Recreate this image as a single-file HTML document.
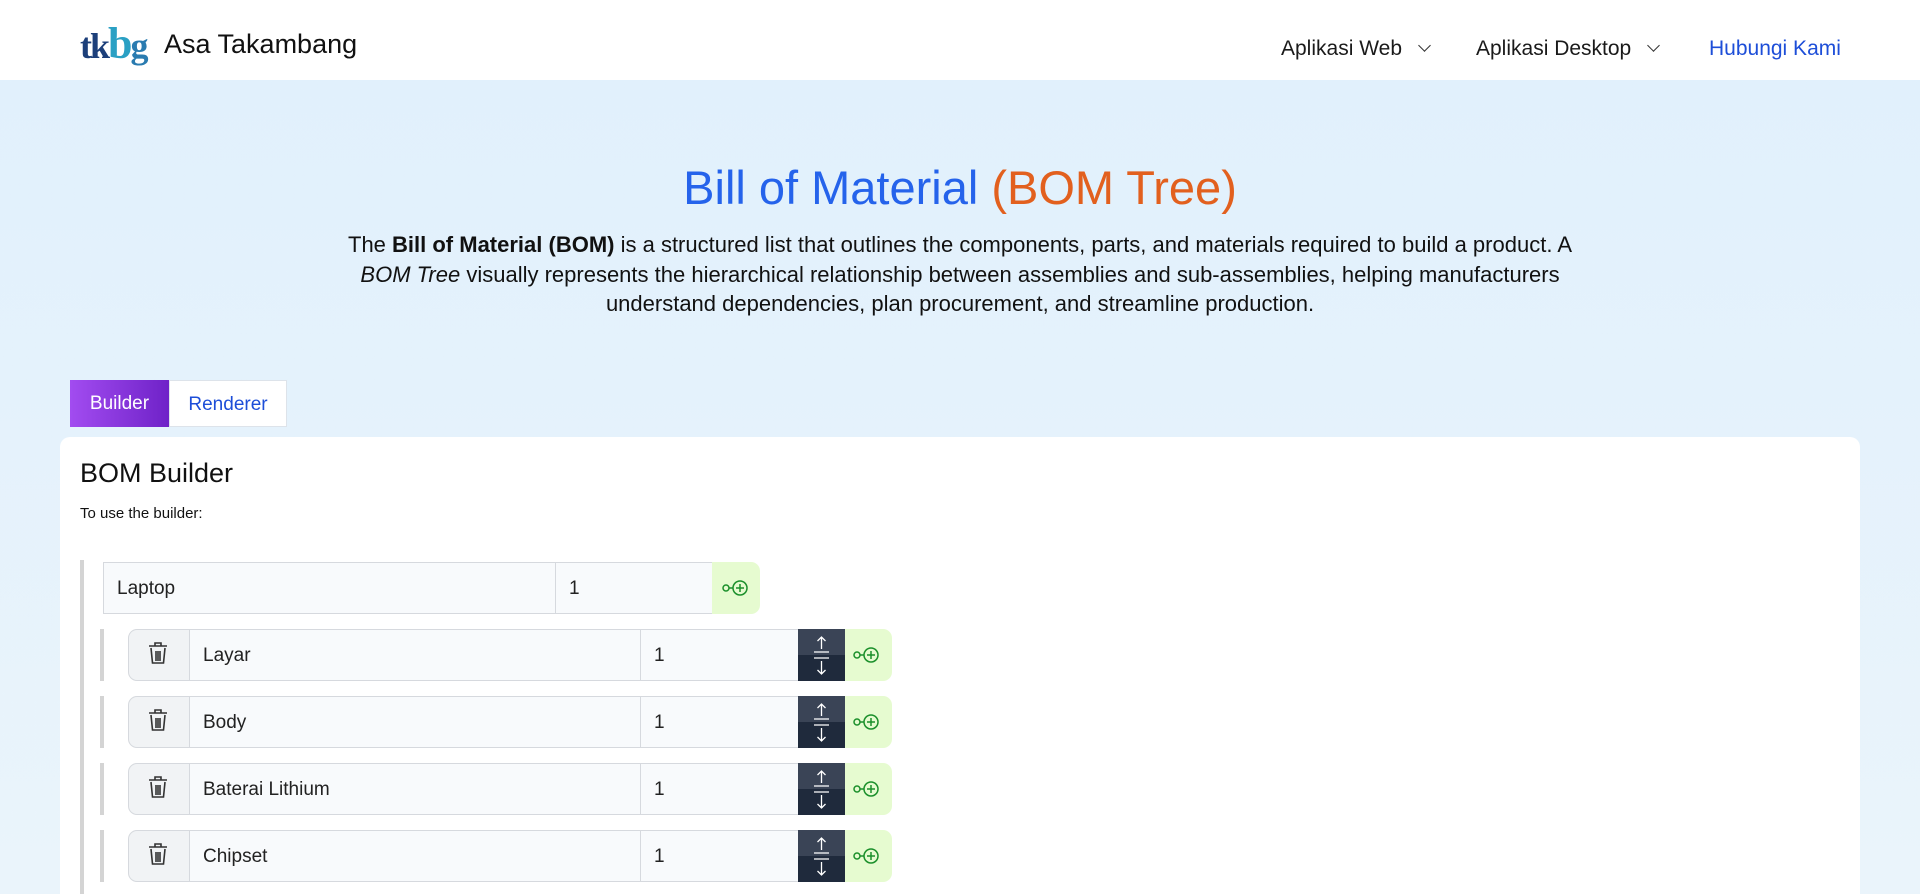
<!DOCTYPE html>
<html><head><meta charset="utf-8"><style>
*{box-sizing:border-box;margin:0;padding:0}
html{width:1920px;height:894px;overflow:hidden}
body{width:1920px;height:894px;overflow:hidden;position:relative;font-family:"Liberation Sans",sans-serif;background:linear-gradient(#e0f0fc,#eaf4fb);color:#111}
.hdr{height:80px;background:#fff;position:relative}
.logo{position:absolute;left:80px;top:18px;font-family:"Liberation Serif",serif;font-weight:bold;font-size:36px;letter-spacing:-2px}
.brand{position:absolute;left:164px;top:29px;font-size:27px;color:#111}
.nav{position:absolute;top:37px;font-size:21px;color:#1a1a1a}
.chev{display:inline-block;width:9px;height:9px;border-right:1.5px solid #333;border-bottom:1.5px solid #333;transform:rotate(45deg);margin-left:18px;position:relative;top:-5px}
h1{position:absolute;top:160px;width:1920px;text-align:center;font-weight:normal;font-size:47px;color:#2563eb}
h1 span{color:#e2601e}
.desc{position:absolute;top:230px;left:335px;width:1250px;text-align:center;font-size:22px;line-height:29.5px;color:#111}
.tab{position:absolute;top:380px;height:47px;font-size:19px;line-height:47px;text-align:center}
.card{position:absolute;left:60px;top:437px;width:1800px;height:500px;background:#fff;border-radius:10px}
.in{position:absolute;background:#f8fafc;border:1.5px solid #d6d9de;font-size:19px;line-height:51px;padding-left:13px;color:#222}
.add{position:absolute;background:#e6fbd0;border-radius:0 9px 9px 0}
.arr{position:absolute;background:#1f2a3c;color:#fff;font-size:14px;text-align:center}
</style></head><body>
<div class="hdr">
<div class="logo"><span style="color:#1c3f7a">tk</span><span style="color:#2aa0c4;font-size:44px">b</span><span style="color:#2a7bb0">g</span></div>
<div class="brand">Asa Takambang</div>
<div class="nav" style="left:1281px">Aplikasi Web<span class="chev"></span></div>
<div class="nav" style="left:1476px">Aplikasi Desktop<span class="chev"></span></div>
<div class="nav" style="left:1709px;color:#1d4ed8">Hubungi Kami</div>
</div>
<h1>Bill of Material <span>(BOM Tree)</span></h1>
<div class="desc">The <b>Bill of Material (BOM)</b> is a structured list that outlines the components, parts, and materials required to build a product. A <i>BOM Tree</i> visually represents the hierarchical relationship between assemblies and sub-assemblies, helping manufacturers understand dependencies, plan procurement, and streamline production.</div>
<div class="tab" style="left:70px;width:99px;background:linear-gradient(90deg,#a24cf0,#6f22c8);color:#fff">Builder</div>
<div class="tab" style="left:169px;width:118px;background:#fff;border:1px solid #dde3ea;color:#1d4ed8">Renderer</div>
<div class="card">
<div style="position:absolute;left:20px;top:21px;font-size:27px">BOM Builder</div>
<div style="position:absolute;left:20px;top:68px;font-size:15px">To use the builder:</div>
<div style="position:absolute;left:20px;top:123px;width:4px;height:360px;background:#d4d4d4"></div>
</div>
<div class="in" style="left:103px;top:562px;width:453px;height:52px">Laptop</div>
<div class="in" style="left:555px;top:562px;width:158px;height:52px">1</div>
<div class="add" style="left:712px;top:562px;width:48px;height:52px"><svg width="48" height="52"><circle cx="14" cy="26" r="3" fill="none" stroke="#1a8f2a" stroke-width="1.5"/><line x1="17" y1="26" x2="21" y2="26" stroke="#1a8f2a" stroke-width="1.5"/><circle cx="28" cy="26" r="7" fill="none" stroke="#1a8f2a" stroke-width="1.5"/><path d="M28 22v8M24 26h8" stroke="#1a8f2a" stroke-width="1.5"/></svg></div>

<div id="rows"></div>
<script>
var names=["Layar","Body","Baterai Lithium","Chipset"],h="";
names.forEach(function(n,i){var t=629+i*67;
h+='<div style="position:absolute;left:100px;top:'+t+'px;width:4px;height:52px;background:#d4d4d4"></div>';
h+='<div class="in" style="left:128px;top:'+t+'px;width:62px;height:52px;border-radius:9px 0 0 9px;background:#f1f3f5;padding:0"><svg width="60" height="49"><g fill="none" stroke="#333" stroke-width="1.6"><path d="M20 16h18M26 16v-3h6v3M22 18l1.5 15h11l1.5-15M27 21v10M29 21v10M31 21v10"/></g></svg></div>';
h+='<div class="in" style="left:189px;top:'+t+'px;width:452px;height:52px">'+n+'</div>';
h+='<div class="in" style="left:640px;top:'+t+'px;width:159px;height:52px">1</div>';
h+='<div class="arr" style="left:798px;top:'+t+'px;width:47px;height:26px;background:#3a4456"><svg width="47" height="26"><path d="M23.5 20V8M19.5 12l4-4 4 4M16 23h15" stroke="#fff" stroke-width="1.3" fill="none"/></svg></div>';
h+='<div class="arr" style="left:798px;top:'+(t+26)+'px;width:47px;height:26px"><svg width="47" height="26"><path d="M16 3h15M23.5 6v13M19.5 15l4 4 4-4" stroke="#fff" stroke-width="1.3" fill="none"/></svg></div>';
h+='<div class="add" style="left:845px;top:'+t+'px;width:47px;height:52px"><svg width="47" height="52"><circle cx="12" cy="26" r="3" fill="none" stroke="#1a8f2a" stroke-width="1.5"/><line x1="15" y1="26" x2="19" y2="26" stroke="#1a8f2a" stroke-width="1.5"/><circle cx="26" cy="26" r="7" fill="none" stroke="#1a8f2a" stroke-width="1.5"/><path d="M26 22v8M22 26h8" stroke="#1a8f2a" stroke-width="1.5"/></svg></div>';
});
document.getElementById("rows").innerHTML=h;
</script>
</body></html>
